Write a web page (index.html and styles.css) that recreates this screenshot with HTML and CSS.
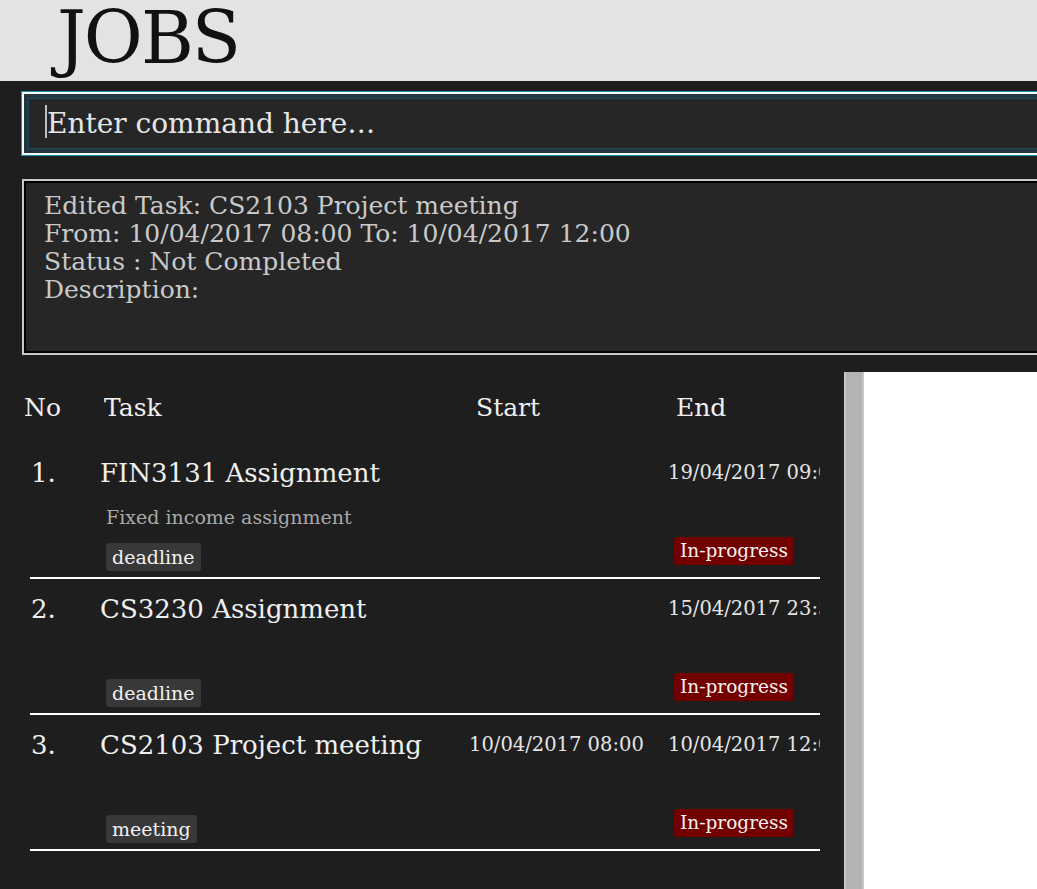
FILE: index.html
```html
<!DOCTYPE html>
<html>
<head>
<meta charset="utf-8">
<link rel="stylesheet" href="styles.css">
</head>
<body>
<div class="app">
  <header class="title-bar"><h1 class="title">JOBS</h1></header>
  <section class="top">
    <div class="command">
      <span class="caret"></span><span class="placeholder">Enter command here…</span>
    </div>
    <div class="result">
      <div class="result-line">Edited Task: CS2103 Project meeting</div>
      <div class="result-line">From: 10/04/2017 08:00 To: 10/04/2017 12:00</div>
      <div class="result-line">Status : Not Completed</div>
      <div class="result-line">Description:</div>
    </div>
  </section>
  <section class="bottom">
    <div class="list">
      <div class="list-head">
        <span class="h-no">No</span>
        <span class="h-task">Task</span>
        <span class="h-start">Start</span>
        <span class="h-end">End</span>
      </div>
      <div class="rows">
        <div class="row">
          <div class="num">1.</div>
          <div class="main">
            <div class="task-title">FIN3131 Assignment</div>
            <div class="desc">Fixed income assignment</div>
            <div class="tags"><span class="tag">deadline</span></div>
          </div>
          <div class="start"></div>
          <div class="end">
            <div class="date">19/04/2017 09:00</div>
            <span class="badge">In-progress</span>
          </div>
        </div>
        <div class="row">
          <div class="num">2.</div>
          <div class="main">
            <div class="task-title">CS3230 Assignment</div>
            <div class="desc"></div>
            <div class="tags"><span class="tag">deadline</span></div>
          </div>
          <div class="start"></div>
          <div class="end">
            <div class="date">15/04/2017 23:59</div>
            <span class="badge">In-progress</span>
          </div>
        </div>
        <div class="row">
          <div class="num">3.</div>
          <div class="main">
            <div class="task-title">CS2103 Project meeting</div>
            <div class="desc"></div>
            <div class="tags"><span class="tag">meeting</span></div>
          </div>
          <div class="start"><div class="date">10/04/2017 08:00</div></div>
          <div class="end">
            <div class="date">10/04/2017 12:00</div>
            <span class="badge">In-progress</span>
          </div>
        </div>
      </div>
    </div>
    <div class="scrollbar"><div class="thumb"></div></div>
    <div class="side"></div>
  </section>
</div>
</body>
</html>
```
FILE: styles.css
```css
html, body {
  margin: 0;
  padding: 0;
  height: 100%;
}
body {
  background: #1e1e1e;
  font-family: "DejaVu Serif", "Liberation Serif", serif;
  overflow: hidden;
}
.app {
  display: flex;
  flex-direction: column;
  height: 889px;
}
.title-bar {
  height: 81px;
  background: #e3e3e3;
  box-sizing: border-box;
  padding-left: 57px;
}
.title {
  margin: 0;
  font-family: "DejaVu Serif", serif;
  font-weight: normal;
  font-size: 72px;
  line-height: 76px;
  color: #111;
  letter-spacing: -2px;
}
.top {
  padding: 11px 0 0 22px;
  overflow: hidden;
}
.command {
  height: 63px;
  margin-right: -20px;
  box-sizing: border-box;
  border: 2px solid #f2fbff;
  box-shadow: 0 0 0 1px #1a8fb3, inset 0 0 0 4px #21363d, inset 0 0 0 5px #1c4a5a;
  background: #262626;
  display: flex;
  align-items: center;
  padding-left: 21px;
}
.caret {
  width: 2px;
  height: 33px;
  background: #bdbdbd;
  margin-top: -4px;
}
.placeholder {
  font-size: 28px;
  color: #e6e6e6;
  white-space: nowrap;
}
.result {
  margin-top: 24px;
  margin-right: -20px;
  height: 176px;
  box-sizing: border-box;
  border: 2px solid #c8c8c8;
  box-shadow: inset 0 0 0 2px #000;
  background: #262626;
  padding: 11px 0 0 20px;
  color: #c9c9c9;
  font-size: 25px;
  line-height: 28px;
}
.result-line {
  white-space: nowrap;
}
.bottom {
  margin-top: 17px;
  flex: 1;
  display: flex;
  min-height: 0;
}
.list {
  width: 844px;
  background: #1e1e1e;
  overflow: hidden;
}
.list-head {
  height: 71px;
  display: grid;
  grid-template-columns: 80px 372px 200px 1fr;
  align-items: center;
  padding-left: 24px;
  font-size: 25px;
  color: #f0f0f0;
}
.rows {
  width: 790px;
  margin-left: 30px;
  overflow: hidden;
}
.row {
  display: grid;
  grid-template-columns: 70px 369px 199px 1fr;
  height: 136px;
  box-sizing: border-box;
  padding-top: 10px;
  border-bottom: 2px solid #ffffff;
  color: #efefef;
}
.num {
  font-size: 26px;
  line-height: 40px;
  padding-left: 1px;
}
.task-title {
  font-size: 26px;
  line-height: 40px;
  white-space: nowrap;
}
.desc {
  margin-top: 10px;
  height: 28px;
  line-height: 28px;
  padding-left: 6px;
  font-size: 19px;
  color: #a9a9a9;
}
.tags {
  margin-top: 12px;
  padding-left: 6px;
  display: flex;
}
.tag {
  background: #383838;
  border-radius: 3px;
  font-size: 19px;
  line-height: 28px;
  padding: 0 6px;
  color: #f2f2f2;
}
.date {
  font-size: 19.5px;
  line-height: 40px;
  white-space: nowrap;
  color: #e4e4e4;
}
.end {
  overflow: hidden;
}
.badge {
  display: inline-block;
  margin-top: 44px;
  margin-left: 6px;
  background: #730000;
  border-radius: 3px;
  font-size: 18.5px;
  line-height: 28px;
  padding: 0 6px;
  color: #f2f2f2;
}
.scrollbar {
  width: 20px;
  background: #c6c6c6;
  box-sizing: border-box;
  padding: 0 2px;
}
.thumb {
  height: 100%;
  background: #b3b3b3;
}
.side {
  flex: 1;
  background: #ffffff;
}
```
